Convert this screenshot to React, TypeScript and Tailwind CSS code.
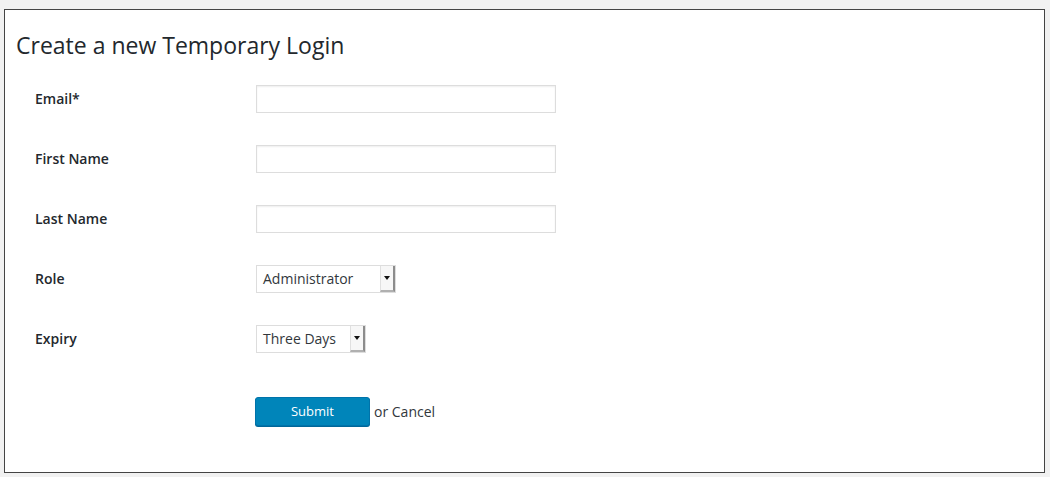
import React from 'react';

const font = { fontFamily: '"Open Sans", "Noto Sans", sans-serif' };

function TextRow({ label }: { label: string }) {
    return (
        <div className="flex h-[60px] items-center">
            <label className="w-[221px] pb-[2px] text-[14px] font-semibold text-[#23282d]">{label}</label>
            <input type="text" className="h-[28px] w-[300px] border border-[#dddddd] bg-white shadow-[inset_0_1px_2px_rgba(0,0,0,0.07)] outline-none" />
        </div>
    );
}

function FakeSelect({ value, width }: { value: string; width: string }) {
    return (
        <div className={`flex h-[28px] ${width} items-stretch border border-[#dddddd] bg-white`}>
            <span className="flex flex-1 items-center pb-[2px] pl-[6px] text-[14px] text-[#32373c]">{value}</span>
            <span className="flex w-[15px] items-center justify-center border-l border-[#e0e0e0] border-r-2 border-r-[#8c8c8c] border-b-2 border-b-[#b0b0b0] bg-[#f7f7f7]">
                <svg width="6" height="4" viewBox="0 0 6 4">
                    <path d="M0 0h6L3 4z" fill="#111" />
                </svg>
            </span>
        </div>
    );
}

export default function App() {
    return (
        <div className="min-h-[477px] bg-[#f1f1f1] pt-[9px] pl-[4px]" style={font}>
            <div className="h-[464px] w-[1041px] border border-[#444444] bg-white pl-[11px] pt-[21px]">
                <h2 className="text-[23px] leading-[29px] font-normal text-[#23282d]">Create a new Temporary Login</h2>
                <div className="mt-[9px] pl-[19px]">
                    <TextRow label="Email*" />
                    <TextRow label="First Name" />
                    <TextRow label="Last Name" />
                    <div className="flex h-[60px] items-center">
                        <label className="w-[221px] pb-[2px] text-[14px] font-semibold text-[#23282d]">Role</label>
                        <FakeSelect value="Administrator" width="w-[140px]" />
                    </div>
                    <div className="flex h-[60px] items-center">
                        <label className="w-[221px] pb-[2px] text-[14px] font-semibold text-[#23282d]">Expiry</label>
                        <FakeSelect value="Three Days" width="w-[110px]" />
                    </div>
                    <div className="mt-[28px] flex items-center pl-[220px]">
                        <button className="h-[29px] w-[115px] rounded-[3px] border border-[#0073aa] bg-[#0085ba] text-[13px] text-white shadow-[0_1px_0_#006799]">
                            Submit
                        </button>
                        <span className="ml-[4px] pb-[1px] text-[14px] text-[#32373c]">or Cancel</span>
                    </div>
                </div>
            </div>
        </div>
    );
}
